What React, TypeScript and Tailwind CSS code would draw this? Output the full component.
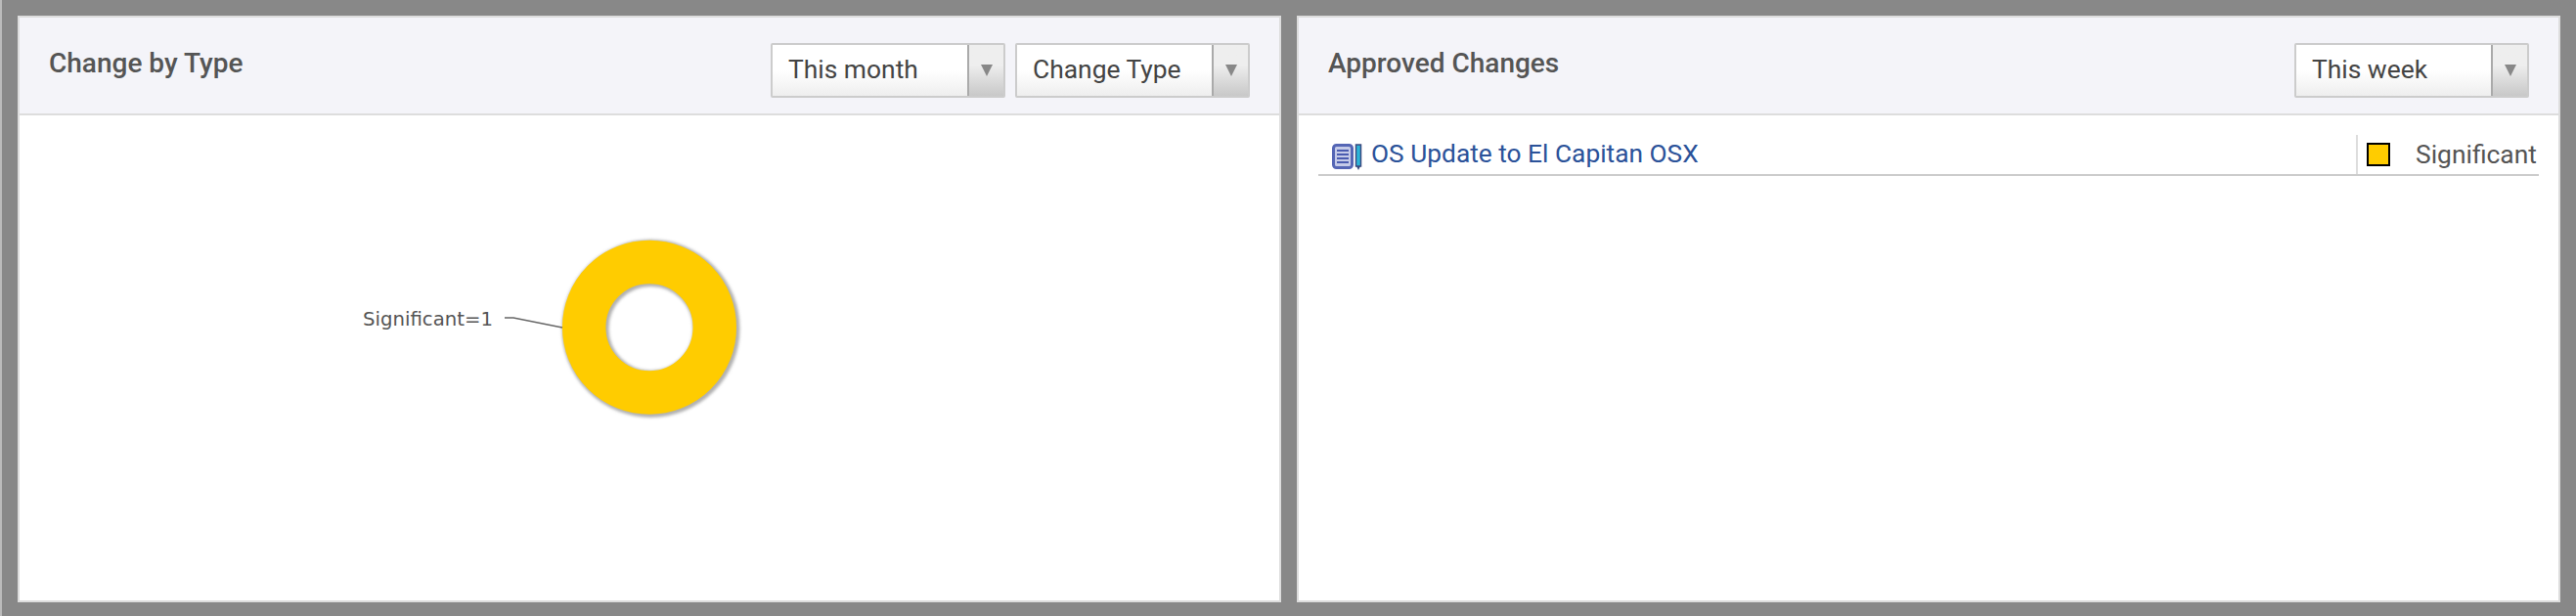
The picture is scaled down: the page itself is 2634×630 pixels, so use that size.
import React from 'react';

const roboto = "font-['Roboto',sans-serif]";

const Select: React.FC<{ label: string }> = ({ label }) => (
  <div className="flex h-14 w-[240px] rounded-[2px] border-2 border-[#cccccc] bg-gradient-to-b from-white from-50% to-[#eeeeee]">
    <div className="flex flex-1 items-center pl-[16px] text-[26.4px] text-[#444444]">{label}</div>
    <div className="flex w-[37px] justify-center border-l-2 border-[#aaaaaa] bg-gradient-to-b from-[#eeeeee] from-40% to-[#c8c8c8] pt-[20px]">
      <svg width="14" height="12" viewBox="0 0 14 12">
        <path d="M1 0h12L7 12z" fill="#888888" />
      </svg>
    </div>
  </div>
);

const PanelHeader: React.FC<{ title: string; children: React.ReactNode }> = ({ title, children }) => (
  <div className="flex h-[100px] items-start justify-between border-b-2 border-[#dddddd] bg-[#f4f4f9]">
    <h2 className="pl-[30px] pt-[29px] text-[28px] font-medium leading-[36px] text-[#555555]">{title}</h2>
    <div className="flex gap-[10px] pr-[30px] pt-[26px]">{children}</div>
  </div>
);

const Donut: React.FC = () => (
  <svg width="1288" height="496" viewBox="0 0 1288 496" className="block">
    <defs>
      <filter id="soft" x="-20%" y="-20%" width="140%" height="140%">
        <feGaussianBlur stdDeviation="1.4" />
      </filter>
    </defs>
    <circle cx="645.5" cy="218" r="67" fill="none" stroke="#b0b0b0" strokeWidth="48" filter="url(#soft)" />
    <circle cx="644" cy="216.7" r="66.8" fill="none" stroke="#ffcc00" strokeWidth="44.5" />
    <path d="M496 207 L505 207 L555 217" fill="none" stroke="#666666" strokeWidth="1.5" />
    <text x="351" y="215" fontFamily="'DejaVu Sans', sans-serif" fontSize="19.7" fill="#555555">
      Significant=1
    </text>
  </svg>
);

const NoteIcon: React.FC = () => (
  <svg width="31" height="28" viewBox="0 0 31 28" className="mt-[6px] shrink-0">
    <rect x="1.5" y="1.5" width="19" height="23" rx="3" fill="#c5cbe8" stroke="#5566b5" strokeWidth="3" />
    <path d="M5 7h12M5 11h12M5 15h12M5 19h12" stroke="#4a5cb0" strokeWidth="2" />
    <rect x="24.5" y="1" width="5" height="22" fill="#2bb5d8" stroke="#3a4a80" strokeWidth="1.5" />
    <path d="M25 23h4l-2 4z" fill="#3a4a80" />
  </svg>
);

export default function App() {
  return (
    <div className={`flex h-[630px] w-full gap-[16px] border-l-2 border-[#bbbbbb] bg-[#888888] pb-[14px] pl-[16px] pr-[16px] pt-[16px] ${roboto}`}>
      <section className="flex w-[1292px] flex-col border-2 border-[#dddddd] bg-white">
        <PanelHeader title="Change by Type">
          <Select label="This month" />
          <Select label="Change Type" />
        </PanelHeader>
        <Donut />
      </section>

      <section className="flex flex-1 flex-col border-2 border-[#dddddd] bg-white">
        <PanelHeader title="Approved Changes">
          <Select label="This week" />
        </PanelHeader>
        <div className="mx-[20px] mt-[20px] flex h-[42px] items-stretch border-b-2 border-[#cccccc]">
          <div className="flex flex-1 items-center gap-[9px] pl-[14px]">
            <NoteIcon />
            <a className="-mt-[2px] text-[26.3px] leading-[30px] text-[#2b5299]">OS Update to El Capitan OSX</a>
          </div>
          <div className="flex w-[187px] items-center gap-[26px] border-l-2 border-[#dddddd] pl-[9px]">
            <span className="h-6 w-6 border-2 border-black bg-[#ffcc00]" />
            <span className="text-[26.4px] leading-[30px] text-[#555555]">Significant</span>
          </div>
        </div>
      </section>
    </div>
  );
}
